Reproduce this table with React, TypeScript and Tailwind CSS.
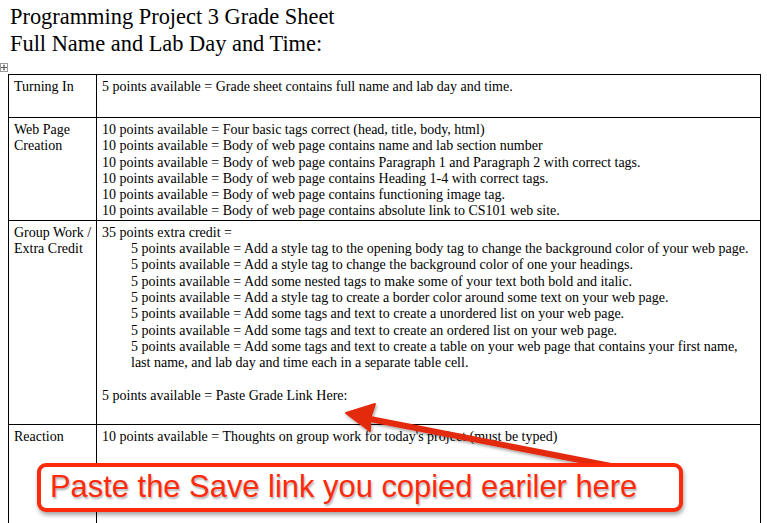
import React from 'react';

const serif = { fontFamily: '"Liberation Serif", "Times New Roman", serif' };

const webPage = [
  '10 points available = Four basic tags correct (head, title, body, html)',
  '10 points available = Body of web page contains name and lab section number',
  '10 points available = Body of web page contains Paragraph 1 and Paragraph 2 with correct tags.',
  '10 points available = Body of web page contains Heading 1-4 with correct tags.',
  '10 points available = Body of web page contains functioning image tag.',
  '10 points available = Body of web page contains absolute link to CS101 web site.',
];

const extra = [
  '5 points available = Add a style tag to the opening body tag to change the background color of your web page.',
  '5 points available = Add a style tag to change the background color of one your headings.',
  '5 points available = Add some nested tags to make some of your text both bold and italic.',
  '5 points available = Add a style tag to create a border color around some text on your web page.',
  '5 points available = Add some tags and text to create a unordered list on your web page.',
  '5 points available = Add some tags and text to create an ordered list on your web page.',
  '5 points available = Add some tags and text to create a table on your web page that contains your first name, last name, and lab day and time each in a separate table cell.',
];

function MoveHandle(): React.JSX.Element {
  return (
    <div className="flex h-[9px] w-[8px] items-center justify-center border border-[#9a9a9a] bg-white">
      <svg width="7" height="7" viewBox="0 0 7 7" aria-hidden>
        <path d="M3.5 0.5v6M0.5 3.5h6" stroke="#444" strokeWidth="1" />
        <path d="M3.5 0L2.3 1.4h2.4zM3.5 7L2.3 5.6h2.4zM0 3.5l1.4-1.2v2.4zM7 3.5L5.6 2.3v2.4z" fill="#444" />
      </svg>
    </div>
  );
}

function Annotation(): React.JSX.Element {
  return (
    <>
      <svg
        className="pointer-events-none absolute left-0 top-0"
        width="767"
        height="523"
        viewBox="0 0 767 523"
        aria-hidden
      >
        <defs>
          <filter id="sh" x="-10%" y="-50%" width="120%" height="200%">
            <feDropShadow dx="1" dy="2" stdDeviation="1.5" floodColor="#000" floodOpacity="0.35" />
          </filter>
        </defs>
        <g filter="url(#sh)">
          <line x1="662" y1="476" x2="370" y2="419" stroke="#e32a10" strokeWidth="6" strokeLinecap="round" />
          <path d="M346 413 L375 404 L370 419 L370 431 Z" fill="#e32a10" stroke="#e32a10" strokeWidth="2" strokeLinejoin="round" />
        </g>
      </svg>
      <div className="absolute left-[37px] top-[463px] flex h-[49px] w-[646px] items-center rounded-[9px] border-[4px] border-[#ff2a0c] bg-white pl-[9px] shadow-[1px_3px_4px_rgba(0,0,0,0.35)]">
        <span
          className="whitespace-nowrap text-[30.9px] leading-none text-[#ff2a0c] [text-shadow:1px_2px_2px_rgba(0,0,0,0.3)]"
          style={{ fontFamily: '"Liberation Sans", Arial, sans-serif' }}
        >
          Paste the Save link you copied eariler here
        </span>
      </div>
    </>
  );
}

export default function App(): React.JSX.Element {
  return (
    <div className="relative h-[523px] w-[767px] overflow-hidden bg-white text-black" style={serif}>
      <div className="pl-[10px] pt-[3px] text-[22.4px] leading-[27px]">
        <div>Programming Project 3 Grade Sheet</div>
        <div>Full Name and Lab Day and Time:</div>
      </div>
      <div className="mt-[6px]">
        <MoveHandle />
      </div>
      <table className="ml-[8px] mt-[2px] w-[753px] table-fixed border-collapse text-[14px] leading-[16.3px]">
        <colgroup>
          <col className="w-[88px]" />
          <col />
        </colgroup>
        <tbody>
          <tr className="h-[43px]">
            <td className="border border-black px-[5px] pt-[4px] align-top">Turning In</td>
            <td className="border border-black px-[5px] pt-[4px] align-top">
              5 points available = Grade sheet contains full name and lab day and time.
            </td>
          </tr>
          <tr className="h-[102px]">
            <td className="border border-black px-[5px] pt-[4px] align-top">Web Page Creation</td>
            <td className="border border-black px-[5px] pt-[4px] align-top">
              {webPage.map((l) => (
                <div key={l}>{l}</div>
              ))}
            </td>
          </tr>
          <tr className="h-[204px]">
            <td className="border border-black pl-[5px] pt-[4px] align-top whitespace-nowrap">
              <div>Group Work /</div>
              <div>Extra Credit</div>
            </td>
            <td className="border border-black px-[5px] pt-[4px] align-top">
              <div>35 points extra credit =</div>
              {extra.map((l) => (
                <div key={l} className="pl-[29px]">
                  {l}
                </div>
              ))}
              <div className="mt-[16.3px]">5 points available = Paste Grade Link Here:</div>
            </td>
          </tr>
          <tr className="h-[120px]">
            <td className="border border-black px-[5px] pt-[4px] align-top">Reaction</td>
            <td className="border border-black px-[5px] pt-[4px] align-top">
              10 points available = Thoughts on group work for today's project (must be typed)
            </td>
          </tr>
        </tbody>
      </table>
      <Annotation />
    </div>
  );
}
